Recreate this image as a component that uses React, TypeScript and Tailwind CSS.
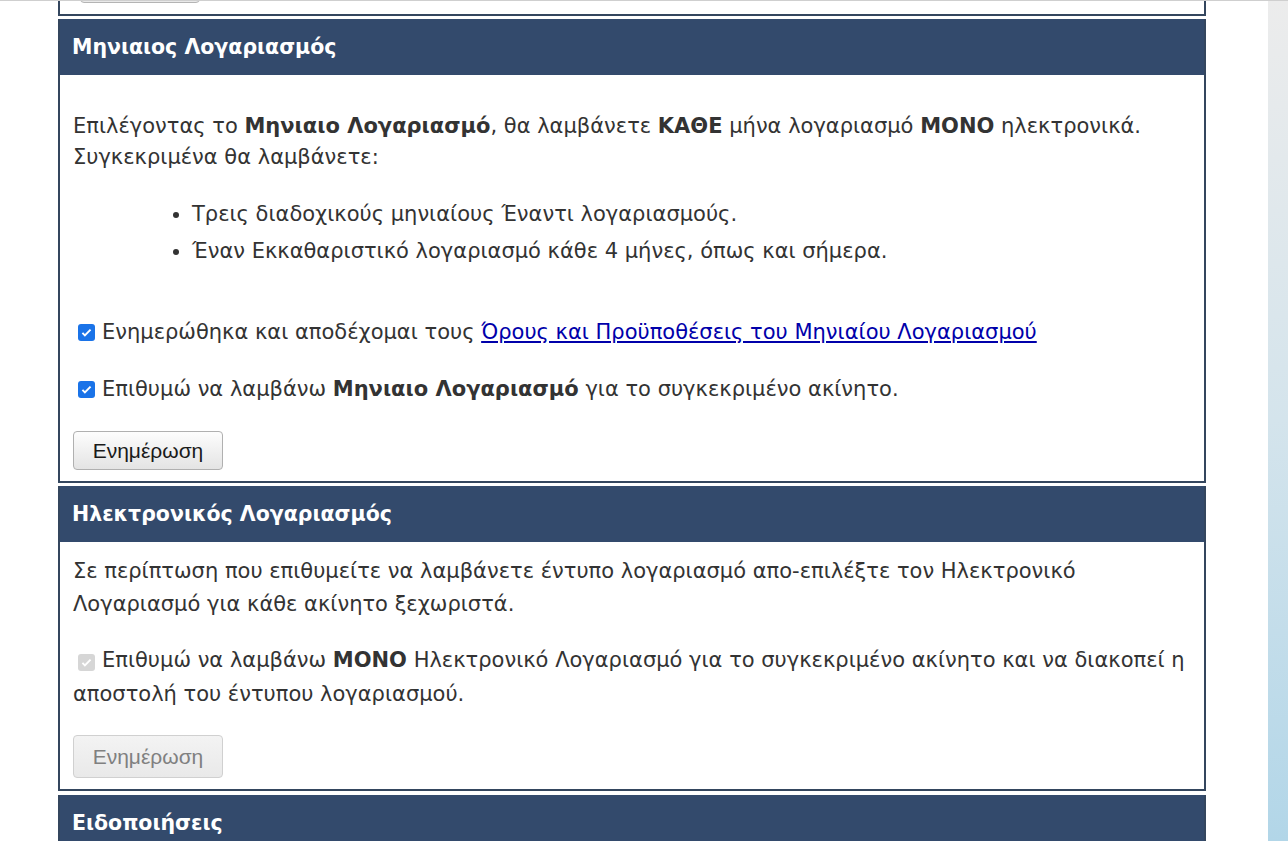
import React from 'react'

const font = { fontFamily: '"DejaVu Sans", Verdana, sans-serif' }

function Header({ title }: { title: string }) {
  return (
    <div className="bg-[#334a6c] h-[56px] flex items-center px-[12px] text-white font-bold text-[20.5px]">
      {title}
    </div>
  )
}

function UpdateButton({ disabled }: { disabled?: boolean }) {
  return (
    <button
      disabled={disabled}
      className={`w-[150px] rounded-[4px] border bg-gradient-to-b text-[21px] ${
        disabled
          ? 'h-[43px] text-[#808080] from-[#f3f3f3] to-[#e9e9e9] border-[#d0d0d0]'
          : 'h-[39px] text-[#1a1a1a] from-[#fdfdfd] to-[#e4e4e4] border-[#b0b0b0]'
      }`}
      style={{ fontFamily: '"Liberation Sans", Arial, sans-serif' }}
    >
      Ενημέρωση
    </button>
  )
}

function Check({ disabled }: { disabled?: boolean }) {
  return (
    <span
      className={`inline-flex items-center justify-center w-[17px] h-[17px] rounded-[3px] ml-[5px] mr-[7px] align-[-2px] shrink-0 ${
        disabled ? 'bg-[#d6d6d6]' : 'bg-[#1a73e8]'
      }`}
    >
      <svg viewBox="0 0 16 16" className="w-[13px] h-[13px]">
        <path d="M3 8.5l3 3 7-7" fill="none" stroke="white" strokeWidth="2.4" />
      </svg>
    </span>
  )
}

export default function App() {
  return (
    <div className="w-[1288px] h-[841px] overflow-hidden bg-white border-t border-[#cfcfcf] flex text-[#333]" style={font}>
      <div className="w-[58px] shrink-0" />
      <div className="w-[1148px] shrink-0 flex flex-col gap-[3px]">
        {/* tail of previous section */}
        <div className="h-[15px] shrink-0 border-x-2 border-b-2 border-[#34465e] overflow-hidden px-[20px]">
          <div className="-mt-[37px] h-[39px] w-[120px] rounded-[4px] border border-[#b4b4b4] bg-[#e9e9e9]" />
        </div>

        <div className="shrink-0 border-2 border-t-0 border-[#34465e]">
          <Header title="Μηνιαιος Λογαριασμός" />
          <div className="px-[13px] pt-[36px] pb-[11px] text-[21px] leading-[31px]">
            <p>
              Επιλέγοντας το <b>Μηνιαιο Λογαριασμό</b>, θα λαμβάνετε <b>ΚΑΘΕ</b> μήνα λογαριασμό <b>ΜΟΝΟ</b>{' '}
              ηλεκτρονικά. Συγκεκριμένα θα λαμβάνετε:
            </p>
            <ul className="list-disc pl-[119px] mt-[23px] leading-[37px]">
              <li>Τρεις διαδοχικούς μηνιαίους Έναντι λογαριασμούς.</li>
              <li>Έναν Εκκαθαριστικό λογαριασμό κάθε 4 μήνες, όπως και σήμερα.</li>
            </ul>
            <div className="mt-[47px] flex items-center">
              <Check />
              <span>
                Ενημερώθηκα και αποδέχομαι τους{' '}
                <a href="#" className="text-[#0000aa] underline">
                  Όρους και Προϋποθέσεις του Μηνιαίου Λογαριασμού
                </a>
              </span>
            </div>
            <div className="mt-[26px] flex items-center">
              <Check />
              <span>
                Επιθυμώ να λαμβάνω <b>Μηνιαιο Λογαριασμό</b> για το συγκεκριμένο ακίνητο.
              </span>
            </div>
            <div className="mt-[26px] flex">
              <UpdateButton />
            </div>
          </div>
        </div>

        <div className="shrink-0 border-2 border-t-0 border-[#34465e]">
          <Header title="Ηλεκτρονικός Λογαριασμός" />
          <div className="px-[13px] pt-[13px] pb-[11px] text-[21px] leading-[33px]">
            <p>
              Σε περίπτωση που επιθυμείτε να λαμβάνετε έντυπο λογαριασμό απο-επιλέξτε τον Ηλεκτρονικό
              Λογαριασμό για κάθε ακίνητο ξεχωριστά.
            </p>
            <p className="mt-[22px] leading-[34px]">
              <Check disabled />
              Επιθυμώ να λαμβάνω <b>ΜΟΝΟ</b> Ηλεκτρονικό Λογαριασμό για το συγκεκριμένο ακίνητο και να διακοπεί η
              αποστολή του έντυπου λογαριασμού.
            </p>
            <div className="mt-[24px] flex">
              <UpdateButton disabled />
            </div>
          </div>
        </div>

        <div className="shrink-0 border-2 border-t-0 border-[#34465e] mt-[1px]">
          <Header title="Ειδοποιήσεις" />
        </div>
      </div>
      <div className="w-[62px] shrink-0" />
      <div className="w-[20px] shrink-0 bg-gradient-to-b from-[#ececec] via-[#d4e4ec] to-[#b2d6e8]" />
    </div>
  )
}
